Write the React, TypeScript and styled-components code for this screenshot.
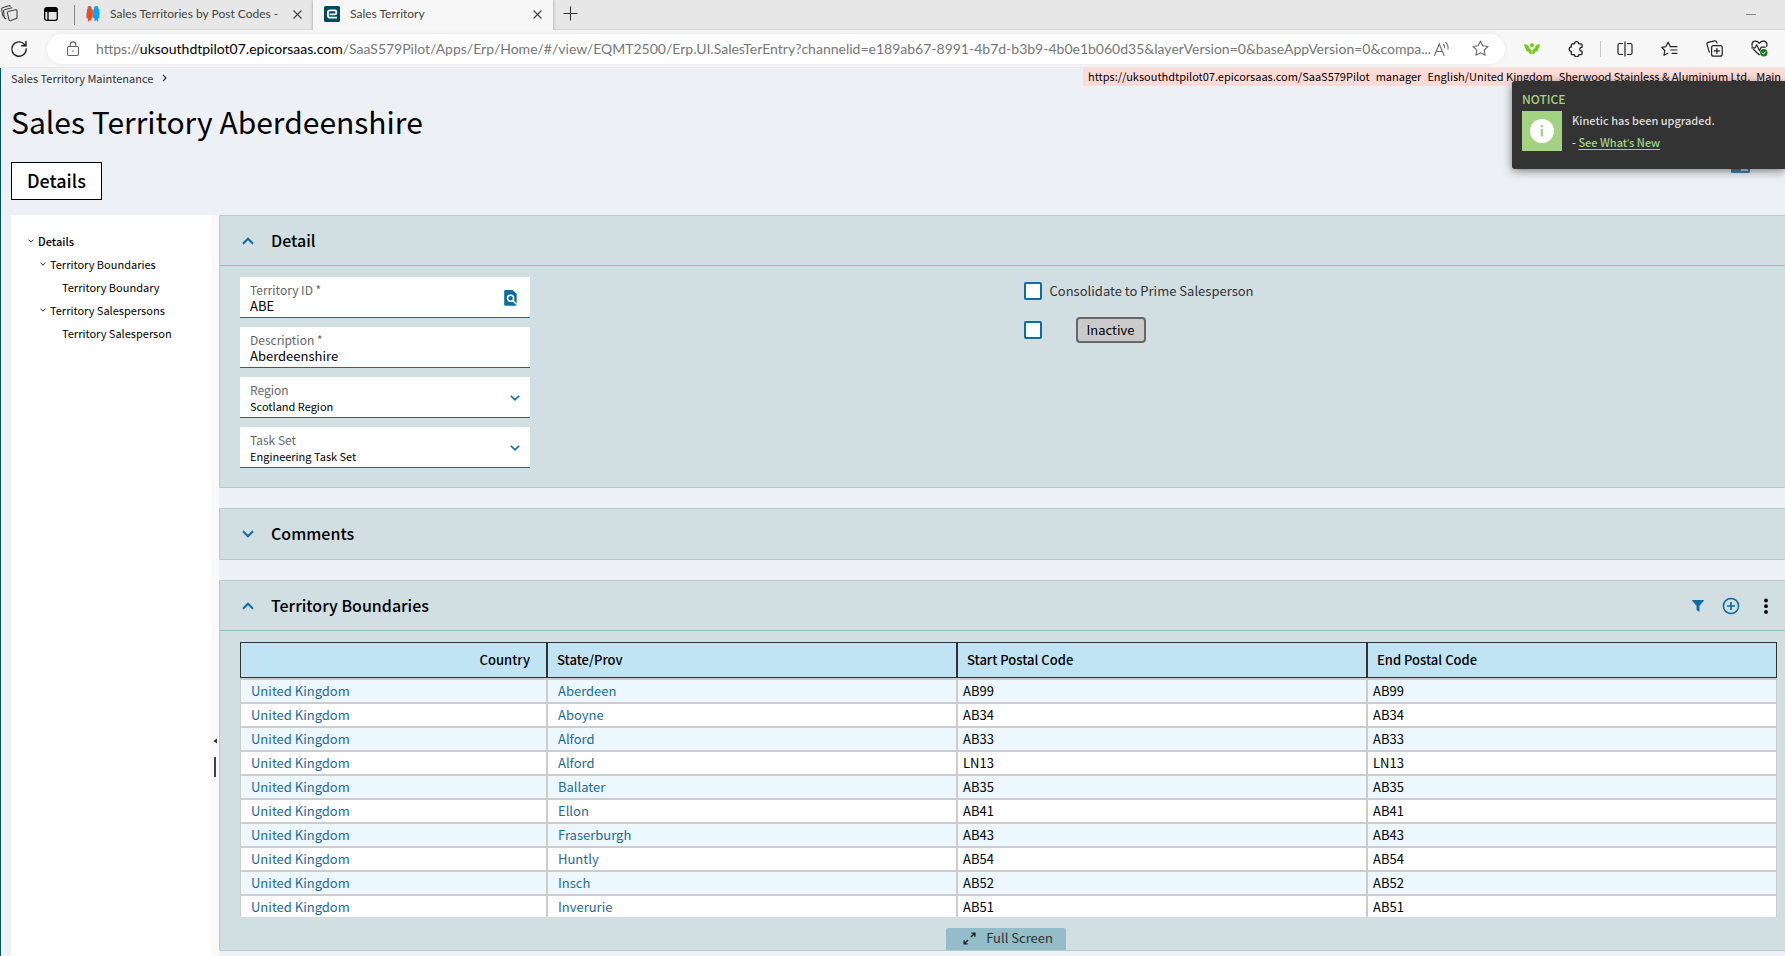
import React from "react";
import styled, { createGlobalStyle } from "styled-components";

const uiFont = `Lato, "Open Sans", sans-serif`;
const blue = "#0f6ca3";

const Global = createGlobalStyle`
  * { box-sizing: border-box; }
  body { margin: 0; background: #edf1f5; color: #000; font-family: "Noto Sans CJK SC", "Open Sans", sans-serif; font-size: 13px; line-height: 16px; }
  button, input, select { font: inherit; color: inherit; }
  button { border: 0; background: none; padding: 0; cursor: pointer; }
  svg { display: block; flex: none; }
`;

const Page = styled.div`
  display: flex;
  flex-direction: column;
  min-height: 100vh;
  overflow: hidden;
`;

/* ---------- browser chrome ---------- */

const TabStrip = styled.header`
  display: flex;
  align-items: stretch;
  height: 30px;
  background: #e7e7e7;
  border-bottom: 1px solid #d6d6d6;
  font-family: ${uiFont};
`;
const StripTools = styled.div`
  display: flex;
  align-items: center;
  gap: 26px;
  width: 74px;
  padding: 0 0 2px 1px;
`;
const StripDivider = styled.div`
  width: 1px;
  margin: 5px 0 4px;
  background: #858585;
`;
const Tab = styled.div<{ $active?: boolean }>`
  display: flex;
  align-items: center;
  gap: 10px;
  width: ${(p) => (p.$active ? 240 : 238)}px;
  height: 30px;
  padding: 0 11px 2px 11px;
  background: ${(p) => (p.$active ? "#f7f7f7" : "transparent")};
  box-shadow: ${(p) => (p.$active ? "0 0 3px rgba(0, 0, 0, 0.35)" : "none")};
  clip-path: inset(-4px -4px 0 -4px);
  font-size: 12px;
  color: #444;
`;
const TabTitle = styled.span`
  flex: 1;
  overflow: hidden;
  white-space: nowrap;
`;
const IconButton = styled.button`
  display: inline-flex;
  align-items: center;
  justify-content: center;
  flex: none;
`;
const NewTab = styled(IconButton)`
  width: 34px;
  padding: 0 0 3px 1px;
`;
const WindowControls = styled.div`
  display: flex;
  align-items: center;
  margin-left: auto;
  padding-right: 29px;
`;
const AddressBar = styled.div`
  display: flex;
  align-items: center;
  height: 38px;
  padding: 0 17px 0 10px;
  background: #f7f7f7;
  border-bottom: 1px solid #e8e8e8;
  font-family: ${uiFont};
`;
const UrlPill = styled.div`
  display: flex;
  flex: 1;
  align-items: center;
  min-width: 0;
  height: 30px;
  margin: 0 19px;
  padding: 0 16px 0 19px;
  border-radius: 15px;
  background: #fff;
  box-shadow: 0 0 4px rgba(0, 0, 0, 0.08);
`;
const Url = styled.div`
  flex: 1;
  padding-left: 16px;
  font-size: 14px;
  line-height: 20px;
  color: #767676;
  white-space: nowrap;
`;
const Host = styled.span`
  color: #000;
`;
const PillTools = styled.div`
  display: flex;
  align-items: center;
  gap: 22px;
`;
const BrowserTools = styled.div`
  display: flex;
  align-items: center;
  gap: 28px;
`;
const SplitTools = styled.div`
  display: flex;
  align-items: center;
  gap: 16px;
`;
const ToolDivider = styled.div`
  width: 1px;
  height: 16px;
  background: #c8c8c8;
`;

/* ---------- application ---------- */

const AppShell = styled.div`
  position: relative;
  display: flex;
  flex: 1;
  flex-direction: column;
  padding-left: 10px;
  border-left: 1px solid #00506b;
`;
const TopRow = styled.div`
  display: flex;
  align-items: flex-start;
  justify-content: space-between;
  height: 33px;
`;
const Breadcrumb = styled.nav`
  display: flex;
  align-items: center;
  gap: 9px;
  padding-top: 2px;
  font-size: 11px;
  color: #333;
  a { color: inherit; text-decoration: none; }
`;
const SessionBar = styled.div`
  display: flex;
  gap: 6px;
  width: 702px;
  height: 18px;
  padding-left: 5px;
  background: #ffdbd8;
  font-size: 11px;
  white-space: nowrap;
`;
const Title = styled.h1`
  margin: 0 0 21px;
  font-size: 30px;
  line-height: 40px;
  font-weight: 400;
`;
const PageTabs = styled.div`
  display: flex;
  align-items: flex-start;
  justify-content: space-between;
  margin-bottom: 15px;
  padding-right: 35px;
`;
const PageTab = styled.button`
  height: 38px;
  padding: 0 15px 2px;
  border: 1px solid #000;
  background: #fff;
  font-size: 18px;
  font-weight: 500;
`;
const Notice = styled.aside`
  position: absolute;
  top: 13px;
  right: 0;
  width: 273px;
  height: 88px;
  padding: 10px;
  border-radius: 3px 0 0 3px;
  background: #333;
  color: #ddd;
  box-shadow: 0 2px 10px rgba(0, 0, 0, 0.5);
  font-size: 11px;
  font-weight: 500;
`;
const NoticeTitle = styled.div`
  margin-bottom: 4px;
  font-size: 12px;
  color: #a3d283;
`;
const NoticeBody = styled.div`
  display: flex;
  gap: 10px;
`;
const NoticeIcon = styled.div`
  display: flex;
  align-items: center;
  justify-content: center;
  width: 40px;
  height: 40px;
  background: #a3d283;
`;
const NoticeText = styled.div`
  display: flex;
  flex-direction: column;
  gap: 6px;
  padding-top: 1px;
  a { color: #a3d283; text-underline-offset: 2px; }
`;
const Apostrophe = styled.span`
  font-family: "Open Sans", sans-serif;
`;

const Workspace = styled.div`
  display: flex;
  flex: 1;
`;
const Sidebar = styled.nav`
  flex: none;
  width: 200px;
  padding: 14px 17px;
  background: #fff;
`;
const TreeItem = styled.a<{ $level: number }>`
  display: flex;
  align-items: center;
  gap: 4px;
  height: 23px;
  padding-left: ${(p) => p.$level * 12}px;
  color: #000;
  font-size: 11px;
  font-weight: ${(p) => (p.$level === 0 ? 500 : 400)};
  text-decoration: none;
  white-space: nowrap;
`;
const TreeSpacer = styled.span`
  width: 6px;
`;
const Splitter = styled.div`
  display: flex;
  flex: none;
  flex-direction: column;
  align-items: center;
  gap: 13px;
  width: 8px;
  padding-top: 523px;
  background: #fafafa;
`;
const SplitHandle = styled.div`
  width: 2px;
  height: 20px;
  background: #404040;
`;
const Panels = styled.main`
  display: flex;
  flex: 1;
  flex-direction: column;
  gap: 20px;
  min-width: 0;
  padding-bottom: 5px;
`;
const Panel = styled.section`
  border: 1px solid #b9cacd;
  border-right: 0;
  border-radius: 2px 0 0 2px;
  background: #d1dee2;
`;
const PanelHeader = styled.div<{ $open?: boolean }>`
  display: flex;
  align-items: center;
  gap: 17px;
  height: 50px;
  padding: 0 14px 0 22px;
  border-bottom: ${(p) => (p.$open ? "1px solid #92bccb" : "0")};
`;
const PanelTitle = styled.h2`
  flex: 1;
  margin: 0;
  padding-bottom: 2px;
  font-size: 16px;
  line-height: 24px;
  font-weight: 500;
`;
const PanelActions = styled.div`
  display: flex;
  align-items: center;
  gap: 18px;
  button:last-child { margin-left: 3px; }
`;
const DetailBody = styled.div`
  display: grid;
  grid-template-columns: 1fr 1fr;
  padding: 11px 0 19px 20px;
`;
const FieldColumn = styled.div`
  display: flex;
  flex-direction: column;
  gap: 9px;
  width: 290px;
`;
const Field = styled.div`
  display: grid;
  grid-template-columns: 1fr auto;
  align-items: center;
  height: 41px;
  padding: 5px 10px 3px;
  border-bottom: 1px solid ${blue};
  background: #fff;
  svg { grid-column: 2; grid-row: 1 / 3; }
`;
const FieldLabel = styled.label`
  grid-column: 1;
  font-size: 12px;
  color: #666;
`;
const FieldInput = styled.input`
  grid-column: 1;
  width: 100%;
  height: 16px;
  padding: 0;
  border: 0;
  outline: 0;
  background: none;
  font-size: 13px;
`;
const FieldSelect = styled.select`
  grid-column: 1;
  width: 100%;
  height: 16px;
  padding: 0;
  border: 0;
  appearance: none;
  background: none;
  font-size: 11px;
`;
const CheckColumn = styled.div`
  display: flex;
  flex-direction: column;
  gap: 21px;
  padding: 5px 0 0 11px;
`;
const CheckRow = styled.div`
  display: flex;
  align-items: center;
  gap: 8px;
  height: 18px;
  color: #333;
`;
const Checkbox = styled.input`
  width: 18px;
  height: 18px;
  margin: 0;
  border: 2px solid ${blue};
  border-radius: 2px;
  appearance: none;
  background: #fff;
`;
const StatusButton = styled.button`
  width: 70px;
  height: 26px;
  margin-left: 26px;
  border: 2px solid #666;
  border-radius: 4px;
  background: #cacaca;
  color: #000;
`;

const GridBody = styled.div`
  padding: 11px 8px 0 20px;
`;
const GridViewport = styled.div`
  max-height: 275px;
  overflow: hidden;
`;
const Grid = styled.table`
  width: 100%;
  border-collapse: separate;
  border-spacing: 0;
  table-layout: fixed;
`;
const CountryCol = styled.col`
  width: 307px;
`;
const HeadCell = styled.th<{ $right?: boolean }>`
  height: 36px;
  padding: 0 16px 0 9px;
  border: 1px solid #333;
  background: #c1e4f5;
  font-weight: 500;
  text-align: ${(p) => (p.$right ? "right" : "left")};
`;
const Row = styled.tr`
  background: #fff;
  &:nth-child(odd) { background: #ecf8fe; }
`;
const Cell = styled.td`
  height: 24px;
  padding: 0 5px;
  border: 1px solid #ccc;
  border-width: 2px 1px 0;
  a { padding-left: 5px; color: #1b6a9c; text-decoration: none; }
`;
const GridFooter = styled.div`
  display: flex;
  justify-content: center;
  padding: 11px 5px 0 0;
`;
const FullScreenButton = styled.button`
  display: flex;
  align-items: center;
  gap: 10px;
  height: 22px;
  padding: 0 13px 2px 17px;
  border-radius: 2px 2px 0 0;
  background: #92bdc9;
  color: #333;
`;

/* ---------- icons ---------- */

const Chevron = ({ up, size = 12, color = blue, weight = 2 }: { up?: boolean; size?: number; color?: string; weight?: number }) => (
  <svg width={size} height={size} viewBox="0 0 12 12" fill="none" stroke={color} strokeWidth={weight}>
    <path d={up ? "M1 8.7 6 3.7l5 5" : "M1 3.3l5 5 5-5"} />
  </svg>
);
const CloseIcon = () => (
  <svg width="9" height="9" viewBox="0 0 9 9" stroke="#444" strokeWidth="1.1"><path d="M.5.5l8 8M8.5.5l-8 8" /></svg>
);
const WorkspacesIcon = () => (
  <svg width="17" height="17" viewBox="0 0 17 17" fill="none" stroke="#444" strokeWidth="1.1" strokeLinejoin="round" strokeLinecap="round">
    <path d="M7.200 6.500 14.400 4.800q1.600-.2 1.600 1.300v6.200q0 1-.9 1.300l-5.200 2q-1.400.4-1.900-.9L6.400 7.900Q6.300 6.800 7.200 6.500z" />
    <path d="M5 13.600q-1.300.3-1.700-.9L2.600 6q0-1 .9-1.300L11 2.700M2.800 11.300q-1-.1-1.200-1L.6 4q0-1 .9-1.300L8 .7q1-.2 1.300.6" />
  </svg>
);
const TabActionsIcon = () => (
  <svg width="14" height="14" viewBox="0 0 14 14" fill="none" stroke="#000" strokeWidth="1.3">
    <rect x=".7" y=".7" width="12.6" height="12.6" rx="2" /><path d="M1 3h12" strokeWidth="4" /><path d="M4 3v10" />
  </svg>
);
const DynamicsIcon = () => (
  <svg width="14" height="16" viewBox="0 0 14 16">
    <path d="M1 4q0-.8.7-1Q1 0 3.500 0T5.500 3q1 .2 1.300 1v7q-.3 1-1.300 1.200L5.200 15l-1.500-1-1.500 2-.5-3.500Q.4 12 .3 11z" fill="#e0522b" />
    <path d="M7.200 4q.2-.8 1-1Q7.800 0 10.300 0T12.300 3q1 .2 1.200 1v7q0 1-1.200 1.300L12 16l-1.700-2-1.500 1.500-.6-3.200Q7.200 12 7 11z" fill="#00a8ef" />
  </svg>
);
const EpicorIcon = () => (
  <svg width="16" height="16" viewBox="0 0 16 16" fill="none">
    <rect width="16" height="16" rx="1.5" fill="#04495a" />
    <path d="M5.500 8.300H11q1.300 0 1.300-1.300V5.600q0-1.300-1.300-1.300H6.200q-2.300 0-2.300 2.200v2.900q0 2.200 2.300 2.200H13" stroke="#fff" strokeWidth="1.8" />
  </svg>
);
const PlusIcon = () => (
  <svg width="15" height="15" viewBox="0 0 15 15" stroke="#333" strokeWidth="1.1"><path d="M7.500 .5v14M.5 7.500h14" /></svg>
);
const ReloadIcon = () => (
  <svg width="18" height="18" viewBox="0 0 18 18" fill="none" stroke="#222" strokeWidth="1.4" strokeLinecap="round">
    <path d="M16.200 9A7.200 7.200 0 1 1 14.300 4.200L15.800 5.600" /><path d="M16 1.500v4.300h-4.300" />
  </svg>
);
const LockIcon = () => (
  <svg width="14" height="16" viewBox="0 0 14 16" fill="none" stroke="#5f5f5f" strokeWidth="1.1">
    <rect x="1.500" y="5.500" width="11" height="9" rx="1.5" /><path d="M4.300 5.500V3.600a2.700 2.700 0 0 1 5.400 0v1.900" /><circle cx="7" cy="10" r=".8" fill="#5f5f5f" stroke="none" />
  </svg>
);
const ReadAloudIcon = () => (
  <svg width="17" height="16" viewBox="0 0 17 16" fill="none" stroke="#6b6b6b" strokeWidth="1.1" strokeLinecap="round">
    <path d="M1.500 14.500 6.300 3l4.800 11.500M3.200 10.500h6.200M10.500 3.500q1.300 1.300 1.100 3.300M12.600 1.300q3 2.800 2.400 6.700" />
  </svg>
);
const StarIcon = () => (
  <svg width="17" height="17" viewBox="0 0 17 17" fill="none" stroke="#6b6b6b" strokeWidth="1.1" strokeLinejoin="round">
    <path d="M8.500 1l2.300 4.800 5.200.7-3.800 3.600.9 5.200-4.600-2.500-4.600 2.500.9-5.200L1 6.500l5.200-.7z" />
  </svg>
);
const SproutIcon = () => (
  <svg width="16" height="12" viewBox="0 0 16 12" fill="#78c91e">
    <circle cx="8" cy="2.300" r="2.100" />
    <path d="M.2 1.300Q3.500 1 4.600 3.300 5 5.500 7.700 7.500V11.500Q6.500 11.300 4.800 9.800 5.200 8.500 4 8.400 1.500 8.600 1.700 6 .2 5 .2 1.300z" />
    <path d="M15.800 1.300Q12.500 1 11.400 3.300 11 5.500 8.300 7.500V11.500Q9.500 11.300 11.200 9.800 10.800 8.500 12 8.400 14.500 8.600 14.300 6 15.800 5 15.800 1.300z" />
  </svg>
);
const PuzzleIcon = () => (
  <svg width="16" height="16" viewBox="0 0 16 16" fill="none" stroke="#222" strokeWidth="1.3" strokeLinejoin="round">
    <path d="M4.300 2.800H6.500a2.100 2.100 0 0 1 4.200 0H13q1 0 1 1V6.300q-2.200-.2-2.200 1.900T14 10.100v2.600q0 1-1 1H10.700a2.100 2.100 0 0 1-4.200 0H4.300q-1 0-1-1V10.300a2.100 2.100 0 0 1 0-4.200V3.800q0-1 1-1z" />
  </svg>
);
const SplitIcon = () => (
  <svg width="16" height="16" viewBox="0 0 16 16" fill="none" stroke="#222" strokeWidth="1.2">
    <path d="M6 2.500H2.500q-1.500 0-1.500 1.500v8q0 1.500 1.500 1.500H6M10 2.500h3.500q1.500 0 1.500 1.500v8q0 1.500-1.500 1.500H10M8 .5v15" />
  </svg>
);
const FavoritesIcon = () => (
  <svg width="17" height="16" viewBox="0 0 17 16" fill="none" stroke="#222" strokeWidth="1.2" strokeLinejoin="round" strokeLinecap="round">
    <path d="M9.300 5.600 7.100 1.200 4.900 5.600l-4.200.7 3.100 3.200-.8 4.800 3.900-2.100M9.300 5.600H16M9.700 9H16M11 12.300h5" />
  </svg>
);
const CollectionsIcon = () => (
  <svg width="17" height="17" viewBox="0 0 17 17" fill="none" stroke="#222" strokeWidth="1.2" strokeLinecap="round">
    <rect x="5.600" y="5.600" width="10.600" height="10.600" rx="2" /><path d="M10.900 8.300v5.200M8.300 10.900h5.200M3.300 12.200 1 4.300Q.7 2.800 2 2.400L8.700.8q1.500-.2 1.900 1.100l.3 1.300" />
  </svg>
);
const HealthIcon = () => (
  <svg width="17" height="17" viewBox="0 0 17 17" fill="none" stroke="#222" strokeWidth="1.2" strokeLinecap="round" strokeLinejoin="round">
    <path d="M1.200 6.300Q.2 2 3.500 1.200 6.500.6 8.300 3.300 10.500.5 13.200 1.200 16.800 2.200 15.700 6.300M2.500 9.500l5.700 5.300M.8 7.800h3.400l1.500-3 2.800 6 1.800-3.700h4" /><circle cx="12.800" cy="12.800" r="3.700" fill="#0f7b1c" stroke="none" /><path d="m11 12.900 1.300 1.200 2.200-2.300" stroke="#fff" strokeWidth="1" />
  </svg>
);
const InfoIcon = () => (
  <svg width="24" height="24" viewBox="0 0 24 24"><circle cx="12" cy="12" r="12" fill="#fff" /><path d="M10.700 6h2.300v2.300h-2.300zM10.700 10h2.300v7.500h-2.300z" fill="#a3d283" /></svg>
);
const LayoutIcon = () => (
  <svg width="19" height="11" viewBox="0 0 19 11"><rect width="19" height="11" rx="1.5" fill="#3f86b0" /><rect x="10" y="3" width="7" height="6" fill="#b9d3e2" /></svg>
);
const LookupIcon = () => (
  <svg width="16" height="16" viewBox="0 0 16 16" fill="none">
    <path d="M1.500 0H8.500L12.700 3.800V14.500q0 1.300-1.300 1.300H1.500Q.2 15.800.2 14.500V1.300Q.2 0 1.500 0z" fill={blue} />
    <circle cx="6.600" cy="8.300" r="3" stroke="#fff" strokeWidth="1.5" /><path d="m8.700 10.500 4 4" stroke="#fff" strokeWidth="1.5" />
  </svg>
);
const FilterIcon = () => (
  <svg width="12" height="12" viewBox="0 0 12 12" fill={blue}><path d="M.3 0h11.400v1L7.500 5.700V12L4.500 10V5.700L.3 1z" /></svg>
);
const AddIcon = () => (
  <svg width="18" height="18" viewBox="0 0 18 18" fill="none" stroke={blue} strokeWidth="1.5"><circle cx="9" cy="9" r="7.600" /><path d="M9 5v8M5 9h8" strokeWidth="1.7" /></svg>
);
const MoreIcon = () => (
  <svg width="10" height="16" viewBox="0 0 10 16"><circle cx="5" cy="2.500" r="1.900" /><circle cx="5" cy="8.200" r="1.900" /><circle cx="5" cy="13.900" r="1.900" /></svg>
);
const ExpandIcon = () => (
  <svg width="13" height="13" viewBox="0 0 14 14" fill="none" stroke="#222" strokeWidth="1.5"><path d="M8.500 5.500l4-4M9 1.200h3.800V5M5.500 8.500l-4 4M1.200 9v3.800H5" /></svg>
);
const CollapseArrow = () => (
  <svg width="4" height="6" viewBox="0 0 4 6"><path d="M4 .5v5L.3 3z" fill="#333" /></svg>
);

/* ---------- data ---------- */

const boundaries = [
  ["Aberdeen", "AB99"], ["Aboyne", "AB34"], ["Alford", "AB33"], ["Alford", "LN13"], ["Ballater", "AB35"],
  ["Ellon", "AB41"], ["Fraserburgh", "AB43"], ["Huntly", "AB54"], ["Insch", "AB52"], ["Inverurie", "AB51"],
];
const tree = [
  { label: "Details", level: 0, open: true },
  { label: "Territory Boundaries", level: 1, open: true },
  { label: "Territory Boundary", level: 2 },
  { label: "Territory Salespersons", level: 1, open: true },
  { label: "Territory Salesperson", level: 2 },
];
const session = [
  "https://uksouthdtpilot07.epicorsaas.com/SaaS579Pilot", "manager", "English/United Kingdom",
  "Sherwood Stainless & Aluminium Ltd.", "Main",
];

export default function App() {
  return (
    <Page>
      <Global />
      <TabStrip>
        <StripTools>
          <IconButton aria-label="Workspaces"><WorkspacesIcon /></IconButton>
          <IconButton aria-label="Tab actions"><TabActionsIcon /></IconButton>
        </StripTools>
        <StripDivider />
        <Tab>
          <DynamicsIcon />
          <TabTitle>Sales Territories by Post Codes -</TabTitle>
          <IconButton aria-label="Close tab"><CloseIcon /></IconButton>
        </Tab>
        <Tab $active>
          <EpicorIcon />
          <TabTitle>Sales Territory</TabTitle>
          <IconButton aria-label="Close tab"><CloseIcon /></IconButton>
        </Tab>
        <NewTab aria-label="New tab"><PlusIcon /></NewTab>
        <WindowControls>
          <IconButton aria-label="Minimise">
            <svg width="10" height="2" viewBox="0 0 10 2"><path d="M0 .5h10" stroke="#888" /></svg>
          </IconButton>
        </WindowControls>
      </TabStrip>
      <AddressBar>
        <IconButton aria-label="Reload"><ReloadIcon /></IconButton>
        <UrlPill>
          <LockIcon />
          <Url>
            https://<Host>uksouthdtpilot07.epicorsaas.com</Host>
            /SaaS579Pilot/Apps/Erp/Home/#/view/EQMT2500/Erp.UI.SalesTerEntry?channelid=e189ab67-8991-4b7d-b3b9-4b0e1b060d35&amp;layerVersion=0&amp;baseAppVersion=0&amp;compa...
          </Url>
          <PillTools>
            <IconButton aria-label="Read aloud"><ReadAloudIcon /></IconButton>
            <IconButton aria-label="Add to favourites"><StarIcon /></IconButton>
          </PillTools>
        </UrlPill>
        <BrowserTools>
          <IconButton aria-label="Extension"><SproutIcon /></IconButton>
          <SplitTools>
            <IconButton aria-label="Extensions"><PuzzleIcon /></IconButton>
            <ToolDivider />
            <IconButton aria-label="Split screen"><SplitIcon /></IconButton>
          </SplitTools>
          <IconButton aria-label="Favourites"><FavoritesIcon /></IconButton>
          <IconButton aria-label="Collections"><CollectionsIcon /></IconButton>
          <IconButton aria-label="Browser essentials"><HealthIcon /></IconButton>
        </BrowserTools>
      </AddressBar>

      <AppShell>
        <TopRow>
          <Breadcrumb>
            <a href="#maintenance">Sales Territory Maintenance</a>
            <svg width="5" height="8" viewBox="0 0 5 8" fill="none" stroke="#333" strokeWidth="1.2"><path d="M1 1l3 3-3 3" /></svg>
          </Breadcrumb>
          <SessionBar>{session.map((s) => <span key={s}>{s}</span>)}</SessionBar>
        </TopRow>
        <Title>Sales Territory Aberdeenshire</Title>
        <PageTabs>
          <PageTab>Details</PageTab>
          <IconButton aria-label="Layout"><LayoutIcon /></IconButton>
        </PageTabs>

        <Workspace>
          <Sidebar>
            {tree.map((t) => (
              <TreeItem key={t.label} href="#tree" $level={t.level}>
                {t.open ? <Chevron size={6} color="#222" /> : <TreeSpacer />}
                {t.label}
              </TreeItem>
            ))}
          </Sidebar>
          <Splitter><CollapseArrow /><SplitHandle /></Splitter>
          <Panels>
            <Panel>
              <PanelHeader $open>
                <IconButton aria-label="Collapse Detail"><Chevron up /></IconButton>
                <PanelTitle>Detail</PanelTitle>
              </PanelHeader>
              <DetailBody>
                <FieldColumn>
                  <Field>
                    <FieldLabel htmlFor="territory">Territory ID *</FieldLabel>
                    <FieldInput id="territory" defaultValue="ABE" />
                    <LookupIcon />
                  </Field>
                  <Field>
                    <FieldLabel htmlFor="description">Description *</FieldLabel>
                    <FieldInput id="description" defaultValue="Aberdeenshire" />
                  </Field>
                  <Field>
                    <FieldLabel htmlFor="region">Region</FieldLabel>
                    <FieldSelect id="region"><option>Scotland Region</option></FieldSelect>
                    <Chevron size={10} />
                  </Field>
                  <Field>
                    <FieldLabel htmlFor="taskset">Task Set</FieldLabel>
                    <FieldSelect id="taskset"><option>Engineering Task Set</option></FieldSelect>
                    <Chevron size={10} />
                  </Field>
                </FieldColumn>
                <CheckColumn>
                  <CheckRow>
                    <Checkbox type="checkbox" id="consolidate" />
                    <label htmlFor="consolidate">Consolidate to Prime Salesperson</label>
                  </CheckRow>
                  <CheckRow>
                    <Checkbox type="checkbox" aria-label="Inactive" />
                    <StatusButton>Inactive</StatusButton>
                  </CheckRow>
                </CheckColumn>
              </DetailBody>
            </Panel>

            <Panel>
              <PanelHeader>
                <IconButton aria-label="Expand Comments"><Chevron /></IconButton>
                <PanelTitle>Comments</PanelTitle>
              </PanelHeader>
            </Panel>

            <Panel>
              <PanelHeader $open>
                <IconButton aria-label="Collapse Territory Boundaries"><Chevron up /></IconButton>
                <PanelTitle>Territory Boundaries</PanelTitle>
                <PanelActions>
                  <IconButton aria-label="Filter"><FilterIcon /></IconButton>
                  <IconButton aria-label="Add"><AddIcon /></IconButton>
                  <IconButton aria-label="More"><MoreIcon /></IconButton>
                </PanelActions>
              </PanelHeader>
              <GridBody>
                <GridViewport>
                  <Grid>
                    <colgroup><CountryCol /><col /><col /><col /></colgroup>
                    <thead>
                      <tr>
                        <HeadCell $right>Country</HeadCell>
                        <HeadCell>State/Prov</HeadCell>
                        <HeadCell>Start Postal Code</HeadCell>
                        <HeadCell>End Postal Code</HeadCell>
                      </tr>
                    </thead>
                    <tbody>
                      {boundaries.map(([town, code]) => (
                        <Row key={code}>
                          <Cell><a href="#country">United Kingdom</a></Cell>
                          <Cell><a href="#state">{town}</a></Cell>
                          <Cell>{code}</Cell>
                          <Cell>{code}</Cell>
                        </Row>
                      ))}
                    </tbody>
                  </Grid>
                </GridViewport>
                <GridFooter>
                  <FullScreenButton><ExpandIcon />Full Screen</FullScreenButton>
                </GridFooter>
              </GridBody>
            </Panel>
          </Panels>
        </Workspace>

        <Notice>
          <NoticeTitle>NOTICE</NoticeTitle>
          <NoticeBody>
            <NoticeIcon><InfoIcon /></NoticeIcon>
            <NoticeText>
              <span>Kinetic has been upgraded.</span>
              <span>- <a href="#new">See What<Apostrophe>’</Apostrophe>s New</a></span>
            </NoticeText>
          </NoticeBody>
        </Notice>
      </AppShell>
    </Page>
  );
}
